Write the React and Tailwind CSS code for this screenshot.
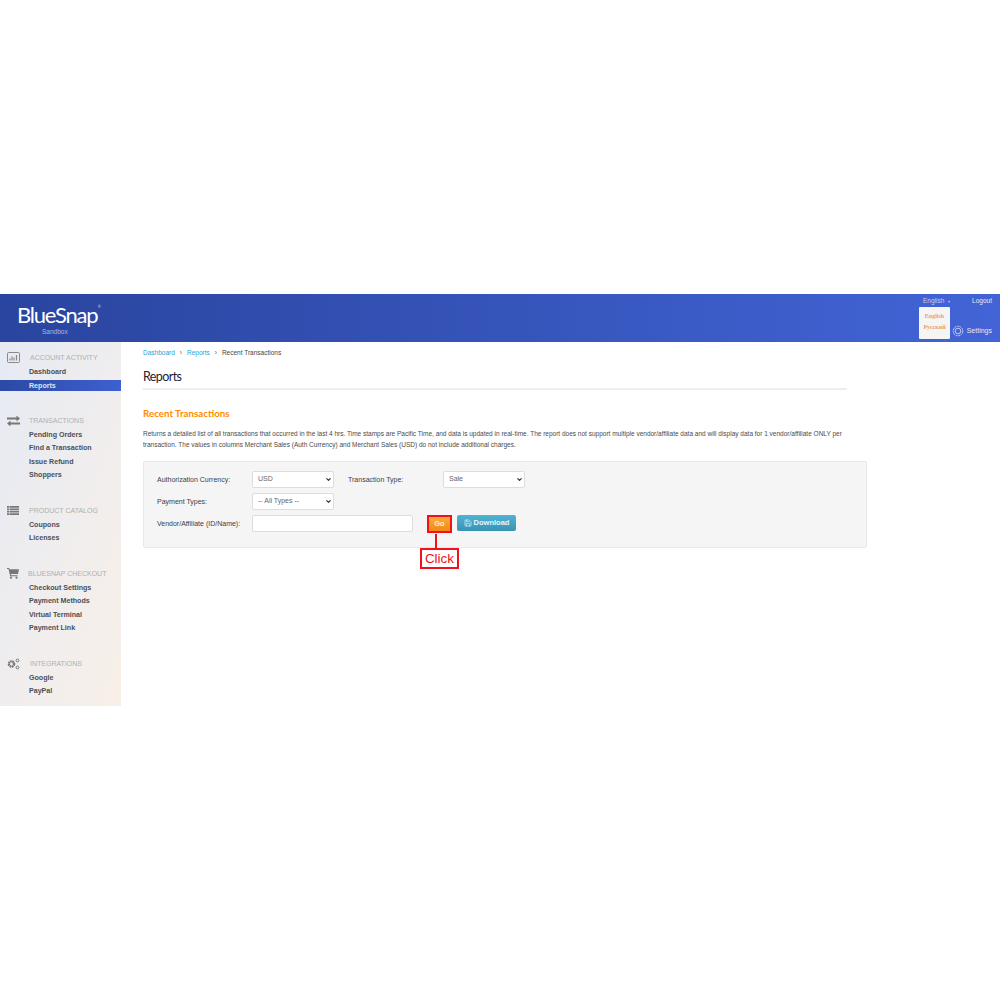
import React from 'react';
import { ChevronDown, Save } from 'lucide-react';

const ChartIcon = () => (
  <svg width="13" height="11" viewBox="0 0 13 11" fill="none" className="text-[#8a8a8a]">
    <rect x="0.5" y="0.5" width="12" height="10" rx="1" stroke="currentColor" />
    <path d="M3 8.5V6.5M5 8.5V4.5M7 8.5V5.5M9.5 8.5V3" stroke="currentColor" strokeWidth="1.2" />
  </svg>
);

const ArrowsIcon = () => (
  <svg width="13" height="10" viewBox="0 0 13 10" fill="#777777">
    <path d="M0 2h9.5V0L13 3l-3.500 3V4H0z" transform="translate(0 -0.500)" />
    <path d="M13 8H3.500v2L0 7l3.500-3v2H13z" transform="translate(0 0.500)" />
  </svg>
);

const ListIcon = () => (
  <svg width="12" height="9" viewBox="0 0 12 9" fill="#777777">
    <path d="M0 0h2v1.700H0zM2.500 0H12v1.700H2.500zM0 2.400h2v1.700H0zM2.500 2.400H12v1.700H2.500zM0 4.800h2v1.700H0zM2.500 4.800H12v1.700H2.500zM0 7.200h2v1.700H0zM2.500 7.200H12v1.700H2.500z" />
  </svg>
);

const CartIcon = () => (
  <svg width="12" height="11" viewBox="0 0 12 11" fill="#777777">
    <path d="M0 0h2.200l.4 1.300H12l-1 4.700H3.800l.3 1.200H10.500v1H3.200L1.500 1H0z" />
    <circle cx="4" cy="9.700" r="1.100" />
    <circle cx="9.500" cy="9.700" r="1.100" />
  </svg>
);

const CogsIcon = () => (
  <svg width="13" height="12" viewBox="0 0 13 12" fill="none" stroke="#777777">
    <circle cx="4.5" cy="6" r="2.6" strokeWidth="2.4" strokeDasharray="1.6 0.5" />
    <circle cx="10.500" cy="2.500" r="1.400" strokeWidth="1" />
    <circle cx="10.500" cy="9.500" r="1.400" strokeWidth="1" />
  </svg>
);

const sections = [
  { title: 'ACCOUNT ACTIVITY', icon: <ChartIcon />, titleClass: 'pl-[30px]', items: ['Dashboard', 'Reports'] },
  { title: 'TRANSACTIONS', icon: <ArrowsIcon />, titleClass: 'pl-[29px]', items: ['Pending Orders', 'Find a Transaction', 'Issue Refund', 'Shoppers'] },
  { title: 'PRODUCT CATALOG', icon: <ListIcon />, titleClass: 'pl-[29px]', items: ['Coupons', 'Licenses'] },
  { title: 'BLUESNAP CHECKOUT', icon: <CartIcon />, titleClass: 'pl-[28px]', items: ['Checkout Settings', 'Payment Methods', 'Virtual Terminal', 'Payment Link'] },
  { title: 'INTEGRATIONS', icon: <CogsIcon />, titleClass: 'pl-[30px]', items: ['Google', 'PayPal'] },
];

const Sidebar = () => (
  <div className="w-[121px] h-[364px] shrink-0 pt-[9px] bg-gradient-to-br from-[#e6eaf3] to-[#f8f0e8] flex flex-col gap-[21.5px]">
    {sections.map((section) => (
      <div key={section.title}>
        <div className={`relative ${section.titleClass} mb-[1px] text-[7px] leading-[13.5px] text-[#b0b0b0]`}>
          <span className="absolute left-[7px] top-0 h-[13.5px] flex items-center">{section.icon}</span>
          {section.title}
        </div>
        {section.items.map((item) => (
          <div
            key={item}
            className={`pl-[29px] text-[7.1px] leading-[13.5px] font-bold ${item === 'Reports' ? 'h-[11px] my-[1.25px] leading-[11px] text-[#dfe5f5] bg-gradient-to-r from-[#2b4aa5] to-[#3e60d0]' : 'text-[#4b4f58]'}`}
          >
            {item}
          </div>
        ))}
      </div>
    ))}
  </div>
);

const Header = () => (
  <div className="relative h-[48px] bg-gradient-to-r from-[#2a459f] to-[#4264d6] flex justify-between text-white">
    <div className="pl-[17px] pt-[9px] w-[110px] flex flex-col items-start">
      <div className="relative text-[22px] leading-[24px] tracking-[-1.2px] font-['Lato']">
        BlueSnap
        <span className="absolute -right-[3px] top-[2px] text-[3px] leading-[4px] tracking-normal">®</span>
      </div>
      <div className="mt-[1px] ml-[25px] text-[6.5px] leading-[8px] text-[#aab8e4]">Sandbox</div>
    </div>
    <div className="w-[69px] mr-[8px] flex flex-col">
      <div className="flex justify-between pt-[3px] text-[6.5px] leading-[8px]">
        <span className="text-[#c5d0ee]">English &nbsp;<span className="text-[4px]">▾</span></span>
        <span className="text-[#e3e8f8]">Logout</span>
      </div>
      <div className="self-end flex items-center gap-[3px] mt-[19px] text-[7px] leading-[12px] text-[#e3e8f8]">
        <svg width="12" height="12" viewBox="0 0 12 12" fill="none" stroke="#e3e8f8" strokeWidth="0.8">
          <circle cx="6" cy="6" r="4.800" strokeDasharray="2 0.6" />
          <circle cx="6" cy="6" r="2.800" />
        </svg>
        <span>Settings</span>
      </div>
    </div>
    <div className="absolute left-[919px] top-[13px] w-[31px] h-[32px] bg-[#f5f5f5] rounded-[1px] flex flex-col items-center gap-[4px] pt-[6px] font-['Liberation_Serif'] font-bold text-[6px] leading-[7px] text-[#f0a05a]">
      <span>English</span>
      <span>Русский</span>
    </div>
  </div>
);

const Field = ({ children }) => (
  <div className="relative w-[82px] h-[17px]">
    <select className="block w-full h-full appearance-none bg-white border border-[#dddddd] rounded-[2px] pl-[5px] text-[7px] text-[#666666]">
      <option>{children}</option>
    </select>
    <ChevronDown size={7} strokeWidth={4} className="absolute right-[2px] top-[5px] text-[#333333]" />
  </div>
);

const Label = ({ children, className = '' }) => (
  <div className={`text-[7px] leading-[17px] text-[#3a3f4a] ${className}`}>{children}</div>
);

const Main = () => (
  <div className="pl-[22px] pt-[6px] w-[746px]">
    <div className="flex items-center gap-[5px] text-[6.5px] leading-[9px]">
      <span className="text-[#2a9fd6]">Dashboard</span>
      <span className="text-[#555555]">›</span>
      <span className="text-[#2a9fd6]">Reports</span>
      <span className="text-[#555555]">›</span>
      <span className="text-[#444444]">Recent Transactions</span>
    </div>
    <div className="w-[704px] mt-[11px] pb-[2px] border-b-2 border-[#eeeeee] text-[12.5px] tracking-[-0.6px] leading-[18px] text-[#1d2233] font-['Lato']">Reports</div>
    <div className="mt-[16px] text-[9.75px] leading-[14px] font-bold text-[#ff8a00] font-['Lato']">Recent Transactions</div>
    <p className="w-[724px] mt-[8px] text-[6.5px] leading-[11px] text-[#4a4a4a]">
      Returns a detailed list of all transactions that occurred in the last 4 hrs. Time stamps are Pacific Time, and data is updated in real-time. The report does not support multiple vendor/affiliate data and will display data for 1 vendor/affiliate ONLY per transaction. The values in columns Merchant Sales (Auth Currency) and Merchant Sales (USD) do not include additional charges.
    </p>
    <div className="relative w-[724px] h-[87px] mt-[11px] pl-[13px] pt-[9px] bg-[#f5f5f5] border border-[#e8e8e8] rounded-[2px] flex flex-col gap-[5px]">
      <div className="flex">
        <Label className="w-[95px]">Authorization Currency:</Label>
        <Field>USD</Field>
        <Label className="w-[95px] ml-[14px]">Transaction Type:</Label>
        <Field>Sale</Field>
      </div>
      <div className="flex">
        <Label className="w-[95px]">Payment Types:</Label>
        <Field>-- All Types --</Field>
      </div>
      <div className="flex">
        <Label className="w-[95px]">Vendor/Affiliate (ID/Name):</Label>
        <input className="w-[161px] h-[17px] bg-white border border-[#dddddd] rounded-[2px]" />
        <button className="w-[25px] h-[18px] ml-[14px] bg-gradient-to-b from-[#fbaa3c] to-[#f28a0d] border-2 border-[#f0101e] text-[7.5px] font-bold text-[#fdf1dc]">Go</button>
        <button className="w-[59px] h-[16px] ml-[5px] rounded-[2px] bg-gradient-to-b from-[#4fb3d3] to-[#3a93b5] flex items-center justify-center gap-[2px] text-[7.5px] font-bold text-[#e8f4f8]">
          <Save size={8} />
          Download
        </button>
      </div>
      {/* Click annotation */}
      <div className="absolute left-[291px] top-[72px] w-[2px] h-[14px] bg-[#f0101e]" />
      <div className="absolute left-[276px] top-[86px] w-[39px] h-[21px] bg-white border-2 border-[#f0101e] flex items-center justify-center text-[13.5px] leading-none text-[#f0101e]">Click</div>
    </div>
  </div>
);

export default function App() {
  return (
    <div className="w-[1000px] h-[1000px] bg-white font-['Liberation_Sans',sans-serif] pt-[294px] overflow-hidden">
      <Header />
      <div className="flex">
        <Sidebar />
        <Main />
      </div>
    </div>
  );
}
